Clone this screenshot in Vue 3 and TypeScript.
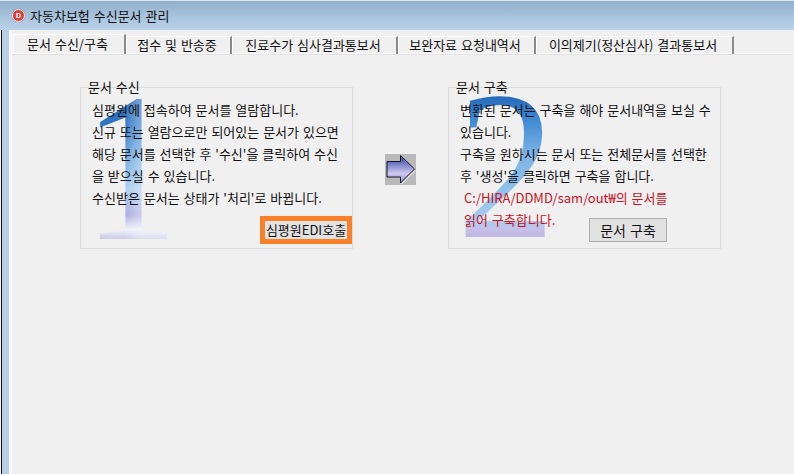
<script setup lang="ts">
const tabs: string[] = ['문서 수신/구축', '접수 및 반송중', '진료수가 심사결과통보서', '보완자료 요청내역서', '이의제기(정산심사) 결과통보서']
const receiveLines: string[] = [
  '심평원에 접속하여 문서를 열람합니다.',
  '신규 또는 열람으로만 되어있는 문서가 있으면',
  "해당 문서를 선택한 후 '수신'을 클릭하여 수신",
  '을 받으실 수 있습니다.',
  "수신받은 문서는 상태가 '처리'로 바뀝니다."
]
const buildLines: string[] = [
  '변환된 문서는 구축을 해야 문서내역을 보실 수',
  '있습니다.',
  '구축을 원하시는 문서 또는 전체문서를 선택한',
  "후 '생성'을 클릭하면 구축을 합니다."
]
</script>

<template>
  <div class="window">
    <div class="frame"></div>
    <div class="main">
      <header class="titlebar">
        <span class="app-icon">D</span>
        <span class="title">자동차보험 수신문서 관리</span>
      </header>
      <div class="body">
        <nav class="tabs">
          <div v-for="(t, i) in tabs" :key="t" class="tab" :class="'tab' + i">{{ t }}</div>
        </nav>
        <div class="content">
          <section class="group">
            <span class="digit one">1</span>
            <span class="legend">문서 수신</span>
            <p v-for="l in receiveLines" :key="l" class="line">{{ l }}</p>
            <div class="edi-wrap"><button class="edi">심평원EDI호출</button></div>
          </section>
          <div class="arrow-box">
            <svg width="31" height="31" viewBox="0 0 31 31">
              <defs>
                <linearGradient id="ag" x1="0" y1="0" x2="0" y2="1">
                  <stop offset="0.15" stop-color="#4f5db0" />
                  <stop offset="0.65" stop-color="#d0c8ee" />
                  <stop offset="0.85" stop-color="#a9a6dc" />
                </linearGradient>
              </defs>
              <path d="M2 7.5 H15.5 V1.5 L29.5 15 L15.5 29 V23 H2 Z" fill="url(#ag)" stroke="#15152a" stroke-width="1" />
              <path d="M16.5 30 L30 16.5" fill="none" stroke="#fff" stroke-width="1" />
            </svg>
          </div>
          <section class="group">
            <span class="digit two">2</span>
            <span class="legend">문서 구축</span>
            <p v-for="l in buildLines" :key="l" class="line">{{ l }}</p>
            <p class="line red">C:/HIRA/DDMD/sam/out₩의 문서를</p>
            <p class="line red">읽어 구축합니다.</p>
            <button class="build">문서 구축</button>
          </section>
        </div>
      </div>
    </div>
  </div>
</template>

<style>
html, body { margin: 0; padding: 0; }
</style>

<style scoped>
.window {
  width: 794px;
  height: 474px;
  display: flex;
  overflow: hidden;
  font-family: "Noto Sans CJK KR", "Liberation Sans", sans-serif;
  color: #111;
  background: #f0f0f0;
}
.frame {
  width: 9px;
  flex: none;
  box-sizing: border-box;
  border-left: 1px solid #f4f6f8;
  background: linear-gradient(90deg, #101010 0 1px, #b9cfe6 1px);
}
.main {
  flex: 1;
  display: flex;
  flex-direction: column;
  min-width: 0;
}
.titlebar {
  height: 30px;
  flex: none;
  margin-left: -9px;
  padding-left: 12px;
  display: flex;
  align-items: center;
  gap: 5px;
  background: linear-gradient(180deg, #90aecb 0%, #a5c0da 45%, #bad2ea 100%);
  border-top: 1px solid #dfe6ee;
  box-sizing: border-box;
  position: relative;
}
.app-icon {
  width: 13px;
  height: 13px;
  border-radius: 50%;
  background: #d8433a;
  border: 1px solid #eee;
  box-sizing: border-box;
  color: #fff;
  font: bold 7px/11px "Liberation Sans", sans-serif;
  text-align: center;
  box-shadow: 0 0 1px #777;
}
.title {
  font-size: 13px;
  line-height: 16px;
  word-spacing: 1px;
  color: #111;
}
.body {
  flex: 1;
  display: flex;
  flex-direction: column;
  border-left: 3px solid #f7f8fa;
}
.tabs {
  height: 24px;
  flex: none;
  display: flex;
  align-items: flex-end;
  box-sizing: border-box;
  border-bottom: 1px solid #fbfbfb;
  box-shadow: 0 1px 0 #e2e2e2;
  background: #f0f0f0;
  padding-left: 1px;
}
.tab {
  height: 18px;
  margin-bottom: -1px;
  box-sizing: border-box;
  border-top: 1px solid #fff;
  border-left: 1px solid #fff;
  border-right: 2px solid #8a8a8a;
  padding-right: 3px;
  font-size: 13px;
  line-height: 15px;
  word-spacing: 1px;
  text-align: center;
  white-space: nowrap;
}
.tab0 { width: 113px; height: 20px; padding-top: 1px; }
.tab1 { width: 106px; }
.tab2 { width: 166px; }
.tab3 { width: 138px; }
.tab4 { width: 198px; }
.content {
  display: flex;
  align-items: flex-start;
  padding: 33px 0 0 68px;
}
.group {
  position: relative;
  width: 273px;
  height: 162px;
  box-sizing: border-box;
  border: 1px solid #dcdcdc;
  padding: 11px 0 0 11px;
}
.legend {
  position: absolute;
  left: 7px;
  top: -8px;
  font-size: 13px;
  line-height: 14px;
  word-spacing: 1px;
  padding-right: 1px;
}
.line {
  position: relative;
  margin: 0;
  height: 22px;
  font-size: 13px;
  line-height: 22px;
  word-spacing: 1px;
  white-space: nowrap;
}
.red { color: #cc1020; left: 4px; }
.digit {
  position: absolute;
  display: block;
  font-family: "Liberation Serif", serif;
  font-size: 212px;
  line-height: 1;
  background-clip: text;
  -webkit-background-clip: text;
  color: transparent;
  transform-origin: left top;
}
.one {
  left: 2px;
  top: -26px;
  transform: scaleX(0.9);
  background-image:
    linear-gradient(90deg, rgba(255, 255, 255, 0) 42%, rgba(255, 255, 255, 0.35) 58%),
    linear-gradient(180deg, #2468b8 16%, #2f78c6 30%, #6ea8e0 45%, #a9cdf0 60%, #a8a8dc 72%, #eef0fa 79%, #c6c6e4 84%);
}
.two {
  left: 8px;
  top: -28px;
  transform: scaleX(0.93);
  background-image: linear-gradient(180deg, #2468b8 16%, #3f88d2 28%, #7fb4e6 45%, #8fbfea 60%, #a9ccf0 76%, #c6c0e8 80%, #bdb6e2 84%);
}
.edi-wrap {
  position: absolute;
  right: 0;
  bottom: 4px;
}
.edi {
  display: block;
  width: 92px;
  height: 28px;
  box-sizing: border-box;
  border: 5px solid #f97f28;
  background: #e2e2e2;
  font: 13px/18px "Noto Sans CJK KR", sans-serif;
  color: #111;
  padding: 0;
}
.build {
  position: absolute;
  left: 140px;
  top: 130px;
  width: 78px;
  height: 24px;
  box-sizing: border-box;
  border: 1px solid #adadad;
  background: #e1e1e1;
  font: 14px/20px "Noto Sans CJK KR", sans-serif;
  word-spacing: 1px;
  color: #111;
  padding: 0;
}
.arrow-box {
  width: 31px;
  height: 31px;
  flex: none;
  margin: 67px 32px 0 32px;
  background: #b9b9b9;
}
.arrow-box svg { display: block; }
</style>
